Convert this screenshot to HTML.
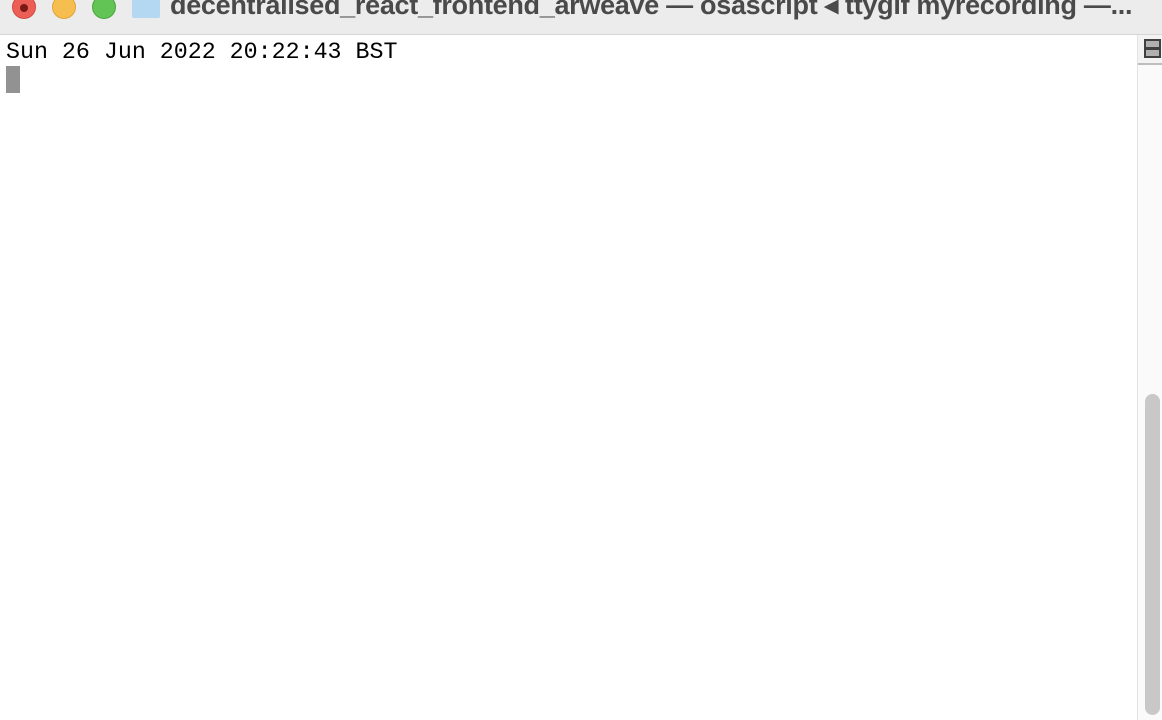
<!DOCTYPE html>
<html><head><meta charset="utf-8"><style>
html,body{margin:0;padding:0;width:1162px;height:720px;overflow:hidden;background:#fff;}
.tb{position:absolute;left:0;top:0;width:1162px;height:34px;background:#ececec;border-bottom:1px solid #d6d6d6;}
.l{position:absolute;width:24px;height:24px;border-radius:50%;top:-5px;}
.title{position:absolute;left:170px;top:-10px;font:bold 27px "Liberation Sans",sans-serif;color:#4a4a4a;white-space:nowrap;letter-spacing:-0.3px;}
.txt{position:absolute;left:6px;top:39px;font:23.3px "Liberation Mono",monospace;color:#000;white-space:pre;}
.cur{position:absolute;left:6px;top:66px;width:14px;height:27px;background:#929292;}
.sb{position:absolute;left:1137px;top:35px;width:25px;height:685px;background:#fafafa;border-left:1px solid #e2e2e2;}
</style></head><body>
<div class="tb">
<div class="l" style="left:12px;background:#ec5f57;border:1px solid #d24b43;width:22px;height:22px"><div style="position:absolute;left:7px;top:8px;width:8px;height:8px;border-radius:50%;background:#7a1a14"></div></div>
<div class="l" style="left:52px;background:#f6be4f;border:1px solid #dfa43b;width:22px;height:22px"></div>
<div class="l" style="left:92px;background:#61c455;border:1px solid #4ca73f;width:22px;height:22px"></div>
<div style="position:absolute;left:132px;top:0;width:28px;height:18px;background:#b5d8f2;border-radius:0 0 2px 2px"></div>
<div class="title">decentralised_react_frontend_arweave — osascript ◂ ttygif myrecording —...</div>
</div>
<div class="txt">Sun 26 Jun 2022 20:22:43 BST</div>
<div class="cur"></div>
<div class="sb">
<div style="position:absolute;left:0;top:0;width:24px;height:28px;border-bottom:2px solid #bdbdbd;background:#f3f3f3"></div>
<div style="position:absolute;left:6px;top:4px;width:13px;height:15px;border:2px solid #404040;background:#b0b0b0"><div style="position:absolute;left:0;top:6px;width:13px;height:3px;background:#404040"></div></div>
<div style="position:absolute;left:7px;top:359px;width:15px;height:321px;border-radius:8px;background:#c8c8c8"></div>
</div>
</body></html>
